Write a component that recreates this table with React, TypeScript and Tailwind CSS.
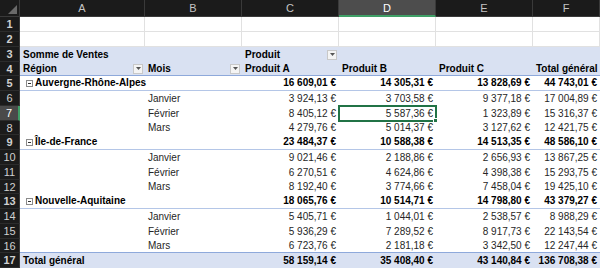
import React from 'react';

type Row = {
    n: number;
    a?: string;
    b?: string;
    vals?: string[];
    kind: 'empty' | 'head3' | 'head4' | 'region' | 'month' | 'total';
};

const ROWS: Row[] = [
    { n: 1, kind: 'empty' },
    { n: 2, kind: 'empty' },
    { n: 3, kind: 'head3' },
    { n: 4, kind: 'head4' },
    { n: 5, kind: 'region', a: 'Auvergne-Rhône-Alpes', vals: ['16 609,01 €', '14 305,31 €', '13 828,69 €', '44 743,01 €'] },
    { n: 6, kind: 'month', b: 'Janvier', vals: ['3 924,13 €', '3 703,58 €', '9 377,18 €', '17 004,89 €'] },
    { n: 7, kind: 'month', b: 'Février', vals: ['8 405,12 €', '5 587,36 €', '1 323,89 €', '15 316,37 €'] },
    { n: 8, kind: 'month', b: 'Mars', vals: ['4 279,76 €', '5 014,37 €', '3 127,62 €', '12 421,75 €'] },
    { n: 9, kind: 'region', a: 'Île-de-France', vals: ['23 484,37 €', '10 588,38 €', '14 513,35 €', '48 586,10 €'] },
    { n: 10, kind: 'month', b: 'Janvier', vals: ['9 021,46 €', '2 188,86 €', '2 656,93 €', '13 867,25 €'] },
    { n: 11, kind: 'month', b: 'Février', vals: ['6 270,51 €', '4 624,86 €', '4 398,38 €', '15 293,75 €'] },
    { n: 12, kind: 'month', b: 'Mars', vals: ['8 192,40 €', '3 774,66 €', '7 458,04 €', '19 425,10 €'] },
    { n: 13, kind: 'region', a: 'Nouvelle-Aquitaine', vals: ['18 065,76 €', '10 514,71 €', '14 798,80 €', '43 379,27 €'] },
    { n: 14, kind: 'month', b: 'Janvier', vals: ['5 405,71 €', '1 044,01 €', '2 538,57 €', '8 988,29 €'] },
    { n: 15, kind: 'month', b: 'Février', vals: ['5 936,29 €', '7 289,52 €', '8 917,73 €', '22 143,54 €'] },
    { n: 16, kind: 'month', b: 'Mars', vals: ['6 723,76 €', '2 181,18 €', '3 342,50 €', '12 247,44 €'] },
    { n: 17, kind: 'total', a: 'Total général', vals: ['58 159,14 €', '35 408,40 €', '43 140,84 €', '136 708,38 €'] },
];

const W = ['w-[125px]', 'w-[97px]', 'w-[97px]', 'w-[97px]', 'w-[97px]', 'w-[67px]'];

const Dropdown = () => (
    <span className="w-[10px] h-[10px] shrink-0 bg-[#f4f4f4] border border-[#c8c8c8] flex items-center justify-center">
        <svg width="5" height="3" viewBox="0 0 5 3"><path d="M0 0h5L2.5 3z" fill="#555" /></svg>
    </span>
);

const Collapse = () => (
    <svg width="7" height="7" viewBox="0 0 7 7" className="shrink-0 mr-[2px]">
        <rect x="0.5" y="0.5" width="6" height="6" fill="#fff" stroke="#8a8a8a" />
        <path d="M2 3.5h3" stroke="#333" />
    </svg>
);

const RowNum = ({ n }: { n: number }) => (
    <div
        className={`w-[20px] shrink-0 h-full flex items-center justify-center text-[11px] border-b border-[#2c2c2c] ${
            n === 7 ? 'bg-[#4a4a4a] text-white border-r-2 border-r-[#3f9f66]' : 'bg-[#1b1b1b] text-[#d0d0d0] border-r border-r-[#3a3a3a]'
        }`}
    >
        {n}
    </div>
);

const SheetRow = ({ row }: { row: Row }) => {
    const blue = row.kind === 'head3' || row.kind === 'head4' || row.kind === 'total';
    const bold = row.kind !== 'month';
    // every fourth row is a pixel shorter, as in the screenshot
    const short = row.n % 4 === 0;
    let line = '';
    if (row.kind === 'empty') line = 'border-b border-r border-[#e1e1e1]';
    else if (row.kind === 'head4') line = 'border-b border-[#8ea9db]';
    else if (row.kind === 'region') line = 'border-b border-[#b4c6e7]';
    else if (row.n === 16) line = 'border-b border-[#8ea9db]';

    const base = `h-full shrink-0 flex items-center whitespace-nowrap ${line}`;

    const cells: React.ReactNode[] = [];
    for (let i = 0; i < 6; i++) {
        let content: React.ReactNode = null;
        let cls = 'pl-[3px] pr-[2px]';
        if (row.kind === 'head3') {
            if (i === 0) content = 'Somme de Ventes';
            if (i === 2) {
                cls = 'pl-[3px] pr-[2px] justify-between';
                content = (<><span>Produit</span><Dropdown /></>);
            }
        } else if (row.kind === 'head4') {
            if (i === 0 || i === 1) {
                cls = 'pl-[3px] pr-[2px] justify-between';
                content = (<><span>{i === 0 ? 'Région' : 'Mois'}</span><Dropdown /></>);
            } else {
                content = ['Produit A', 'Produit B', 'Produit C', 'Total général'][i - 2];
            }
        } else if (row.kind !== 'empty') {
            if (i === 0 && row.a) {
                if (row.kind === 'region') {
                    cls = 'pl-[6px]';
                    content = (<><Collapse /><span>{row.a}</span></>);
                } else content = row.a;
            }
            if (i === 1 && row.b) content = row.b;
            if (i >= 2 && row.vals) {
                cls = 'justify-end pr-[3px]';
                content = row.vals[i - 2];
            }
        }
        const selected = row.n === 7 && i === 3;
        cells.push(
            <div key={i} className={`${base} ${W[i]} ${cls} ${selected ? 'relative' : ''}`}>
                {content}
                {selected && (
                    <div className="absolute -left-[1px] -top-[1px] -right-[1px] -bottom-[1px] border-2 border-[#217346]">
                        <span className="absolute -right-[3px] -bottom-[3px] w-[5px] h-[5px] bg-[#217346] border border-white" />
                    </div>
                )}
            </div>
        );
    }

    return (
        <div
            className={`flex ${short ? 'h-[14px]' : 'h-[15px]'} ${blue ? 'bg-[#d9e1f2]' : 'bg-white'} ${bold ? 'font-bold text-black' : 'text-[#262626]'}`}
        >
            <RowNum n={row.n} />
            {cells}
        </div>
    );
};

const App: React.FC = () => {
    const letters = ['A', 'B', 'C', 'D', 'E', 'F'];
    return (
        <div
            className="w-[600px] h-[268px] overflow-hidden bg-white text-[10px] leading-[14px]"
            style={{ fontFamily: '"Liberation Sans", Arial, sans-serif' }}
        >
            <div className="w-[650px]">
                <div className="flex h-[17px] bg-[#1b1b1b] text-[11px]">
                    <div className="w-[20px] shrink-0 h-full relative border-r border-b border-[#3a3a3a]">
                        <svg width="9" height="9" viewBox="0 0 9 9" className="absolute right-[2px] bottom-[2px]">
                            <path d="M9 0V9H0z" fill="#6a6a6a" />
                        </svg>
                    </div>
                    {letters.map((l, i) => (
                        <div
                            key={l}
                            className={`${W[i]} shrink-0 h-full flex items-center justify-center border-r border-[#3a3a3a] ${
                                l === 'D' ? 'bg-[#4d4d4d] text-white border-b-2 border-b-[#3f9f66]' : 'text-[#c4c4c4] border-b border-b-[#3a3a3a]'
                            }`}
                        >
                            {l}
                        </div>
                    ))}
                </div>
                {ROWS.map(r => <SheetRow key={r.n} row={r} />)}
            </div>
        </div>
    );
};

export default App;
